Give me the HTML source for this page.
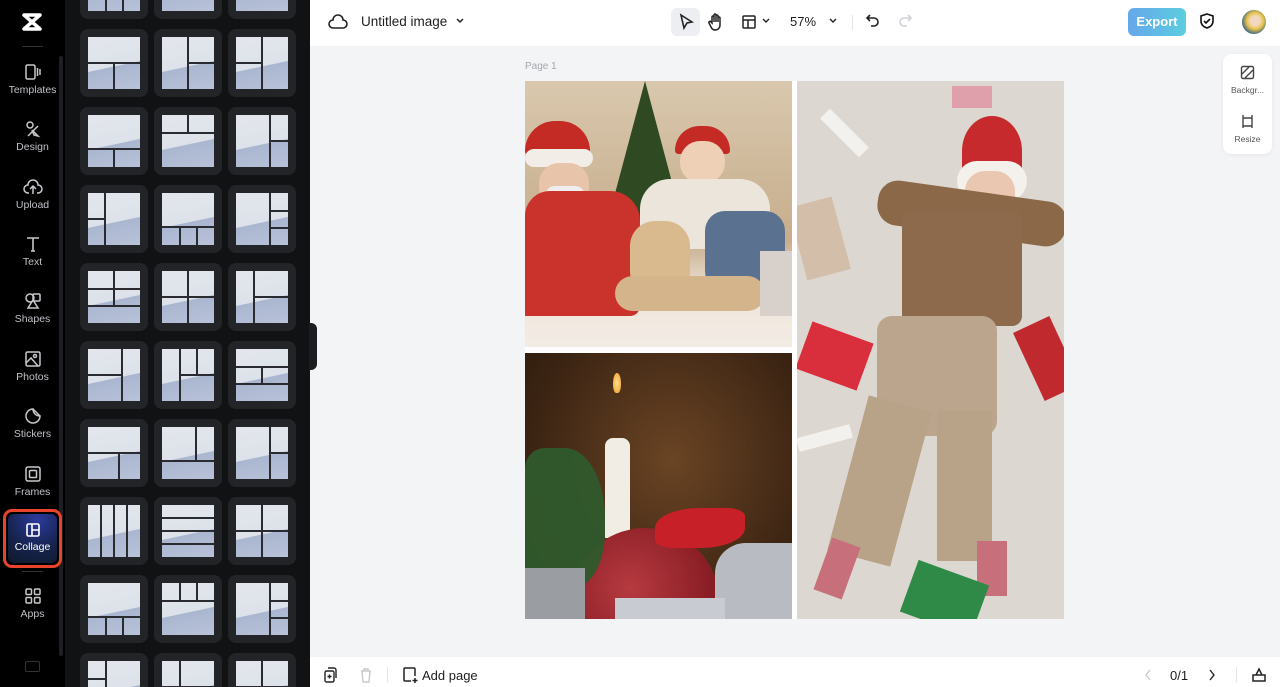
<!DOCTYPE html>
<html><head><meta charset="utf-8"><style>
*{box-sizing:border-box;margin:0;padding:0}
body{width:1280px;height:687px;overflow:hidden;font-family:"Liberation Sans",sans-serif;background:#f3f4f6;position:relative}
.side{position:absolute;left:0;top:0;width:65px;height:687px;background:#000}
.nav{position:absolute;left:0;width:65px;text-align:center;color:#bfc1c6;font-size:10.5px}
.nav svg{display:block;margin:0 auto 3px}
.panel{position:absolute;left:65px;top:0;width:245px;height:687px;background:#111214;overflow:hidden}
.card{position:absolute;width:68px;height:68px;background:#232428;border-radius:8px}
.t{position:absolute;left:8px;top:8px;width:52px;height:52px;background:linear-gradient(168deg,#e3e6ec 0%,#dde2ea 55%,#aab6d0 56%,#b8c2d9 100%);overflow:hidden}
.t i{position:absolute;background:#2a2b30}
.top{position:absolute;left:310px;top:0;width:970px;height:46px;background:#fff}
.bot{position:absolute;left:310px;top:657px;width:970px;height:30px;background:#fff}
.ph{position:absolute;overflow:hidden}
.ph div{position:absolute}
</style></head><body>
<div class="side">
 <svg style="position:absolute;left:20px;top:11px" width="24" height="22" viewBox="0 0 24 22"><path d="M4 4h16L4 18h16L4 4z" fill="none" stroke="#fff" stroke-width="3.5" stroke-linejoin="round"/></svg>
 <div style="position:absolute;left:22px;top:46px;width:21px;height:1px;background:#333"></div>
 <div style="position:absolute;left:59px;top:56px;width:4px;height:600px;background:#1e1f22;border-radius:2px"></div>
 <div class="nav" style="top:63px"><svg width="18" height="18" viewBox="0 0 18 18" fill="none" stroke="#c6c8cc" stroke-width="1.5"><rect x="2" y="2" width="9" height="14" rx="1.5"/><path d="M13.5 5v8M16 6v6"/></svg>Templates</div>
 <div class="nav" style="top:120px"><svg width="18" height="18" viewBox="0 0 18 18" fill="none" stroke="#c6c8cc" stroke-width="1.5"><circle cx="6" cy="5" r="3"/><path d="M4 16l10-10M8 10l6 6-4-1z"/></svg>Design</div>
 <div class="nav" style="top:178px"><svg width="20" height="18" viewBox="0 0 20 18" fill="none" stroke="#c6c8cc" stroke-width="1.5"><path d="M6 15H5a4 4 0 0 1 0-8 5 5 0 0 1 10 0 4 4 0 0 1 0 8h-1M10 16V9M7 11l3-3 3 3"/></svg>Upload</div>
 <div class="nav" style="top:235px"><svg width="18" height="18" viewBox="0 0 18 18" fill="none" stroke="#c6c8cc" stroke-width="1.6"><path d="M3 3h12M9 3v13M7 16h4"/></svg>Text</div>
 <div class="nav" style="top:292px"><svg width="18" height="18" viewBox="0 0 18 18" fill="none" stroke="#c6c8cc" stroke-width="1.5"><circle cx="6" cy="6" r="4"/><rect x="9" y="2" width="7" height="7" rx="1"/><path d="M9 8l-5 8h10z"/></svg>Shapes</div>
 <div class="nav" style="top:350px"><svg width="18" height="18" viewBox="0 0 18 18" fill="none" stroke="#c6c8cc" stroke-width="1.5"><rect x="2" y="2" width="14" height="14" rx="1.5"/><circle cx="11" cy="6" r="1.5"/><path d="M2 13l5-5 7 8"/></svg>Photos</div>
 <div class="nav" style="top:407px"><svg width="18" height="18" viewBox="0 0 18 18" fill="none" stroke="#c6c8cc" stroke-width="1.5"><path d="M16 9A7 7 0 1 1 9 2c0 4 3 7 7 7zM9 2l7 7"/></svg>Stickers</div>
 <div class="nav" style="top:465px"><svg width="18" height="18" viewBox="0 0 18 18" fill="none" stroke="#c6c8cc" stroke-width="1.5"><rect x="2" y="2" width="14" height="14" rx="2"/><rect x="5.5" y="5.5" width="7" height="7" rx="1"/></svg>Frames</div>
 <div style="position:absolute;left:3px;top:509px;width:59px;height:59px;border:3px solid #e8432b;border-radius:9px;background:#000"></div>
 <div style="position:absolute;left:8px;top:514px;width:49px;height:49px;border-radius:6px;background:radial-gradient(circle at 60% 10%,#2b3a9c,#15224a 60%,#0f1a2a)"></div>
 <div class="nav" style="top:522px;color:#fff"><svg width="16" height="16" viewBox="0 0 16 16" fill="none" stroke="#fff" stroke-width="1.6"><rect x="2" y="2" width="12" height="12" rx="1.5"/><path d="M7 2v12M7 8h7"/></svg>Collage</div>
 <div style="position:absolute;left:22px;top:571px;width:21px;height:1px;background:#333"></div>
 <div class="nav" style="top:587px"><svg width="18" height="18" viewBox="0 0 18 18" fill="none" stroke="#c6c8cc" stroke-width="1.5"><rect x="2" y="2" width="5.5" height="5.5" rx="1"/><rect x="10.5" y="2" width="5.5" height="5.5" rx="1"/><rect x="2" y="10.5" width="5.5" height="5.5" rx="1"/><rect x="10.5" y="10.5" width="5.5" height="5.5" rx="1"/></svg>Apps</div>
 <div style="position:absolute;left:25px;top:661px;width:15px;height:11px;border:1.5px solid #333;border-radius:2px"></div>
</div>
<div class="panel">
<div class="card" style="left:15px;top:-49px"><div class="t"><i style="left:17px;top:0;width:2px;height:52px"></i><i style="left:34px;top:0;width:2px;height:52px"></i></div></div>
<div class="card" style="left:89px;top:-49px"><div class="t"></div></div>
<div class="card" style="left:163px;top:-49px"><div class="t"></div></div>
<div class="card" style="left:15px;top:29px"><div class="t"><i style="left:0;top:25px;width:52px;height:2px"></i><i style="left:25px;top:25px;width:2px;height:27px"></i></div></div>
<div class="card" style="left:89px;top:29px"><div class="t"><i style="left:25px;top:0;width:2px;height:52px"></i><i style="left:25px;top:25px;width:27px;height:2px"></i></div></div>
<div class="card" style="left:163px;top:29px"><div class="t"><i style="left:25px;top:0;width:2px;height:52px"></i><i style="left:0;top:25px;width:27px;height:2px"></i></div></div>
<div class="card" style="left:15px;top:107px"><div class="t"><i style="left:0;top:33px;width:52px;height:2px"></i><i style="left:25px;top:33px;width:2px;height:19px"></i></div></div>
<div class="card" style="left:89px;top:107px"><div class="t"><i style="left:0;top:17px;width:52px;height:2px"></i><i style="left:25px;top:0;width:2px;height:17px"></i></div></div>
<div class="card" style="left:163px;top:107px"><div class="t"><i style="left:33px;top:0;width:2px;height:52px"></i><i style="left:33px;top:25px;width:19px;height:2px"></i></div></div>
<div class="card" style="left:15px;top:185px"><div class="t"><i style="left:16px;top:0;width:2px;height:52px"></i><i style="left:0;top:25px;width:16px;height:2px"></i></div></div>
<div class="card" style="left:89px;top:185px"><div class="t"><i style="left:0;top:33px;width:52px;height:2px"></i><i style="left:17px;top:33px;width:2px;height:19px"></i><i style="left:34px;top:33px;width:2px;height:19px"></i></div></div>
<div class="card" style="left:163px;top:185px"><div class="t"><i style="left:33px;top:0;width:2px;height:52px"></i><i style="left:33px;top:17px;width:19px;height:2px"></i><i style="left:33px;top:34px;width:19px;height:2px"></i></div></div>
<div class="card" style="left:15px;top:263px"><div class="t"><i style="left:0;top:17px;width:52px;height:2px"></i><i style="left:0;top:34px;width:52px;height:2px"></i><i style="left:25px;top:0;width:2px;height:34px"></i></div></div>
<div class="card" style="left:89px;top:263px"><div class="t"><i style="left:25px;top:0;width:2px;height:52px"></i><i style="left:0;top:25px;width:52px;height:2px"></i></div></div>
<div class="card" style="left:163px;top:263px"><div class="t"><i style="left:17px;top:0;width:2px;height:52px"></i><i style="left:17px;top:25px;width:35px;height:2px"></i></div></div>
<div class="card" style="left:15px;top:341px"><div class="t"><i style="left:33px;top:0;width:2px;height:52px"></i><i style="left:0;top:25px;width:33px;height:2px"></i></div></div>
<div class="card" style="left:89px;top:341px"><div class="t"><i style="left:17px;top:0;width:2px;height:52px"></i><i style="left:17px;top:25px;width:35px;height:2px"></i><i style="left:34px;top:0;width:2px;height:25px"></i></div></div>
<div class="card" style="left:163px;top:341px"><div class="t"><i style="left:0;top:17px;width:52px;height:2px"></i><i style="left:0;top:34px;width:52px;height:2px"></i><i style="left:25px;top:17px;width:2px;height:17px"></i></div></div>
<div class="card" style="left:15px;top:419px"><div class="t"><i style="left:0;top:25px;width:52px;height:2px"></i><i style="left:30px;top:25px;width:2px;height:27px"></i></div></div>
<div class="card" style="left:89px;top:419px"><div class="t"><i style="left:33px;top:0;width:2px;height:33px"></i><i style="left:0;top:33px;width:52px;height:2px"></i></div></div>
<div class="card" style="left:163px;top:419px"><div class="t"><i style="left:33px;top:0;width:2px;height:52px"></i><i style="left:33px;top:25px;width:19px;height:2px"></i></div></div>
<div class="card" style="left:15px;top:497px"><div class="t"><i style="left:12px;top:0;width:2px;height:52px"></i><i style="left:25px;top:0;width:2px;height:52px"></i><i style="left:38px;top:0;width:2px;height:52px"></i></div></div>
<div class="card" style="left:89px;top:497px"><div class="t"><i style="left:0;top:12px;width:52px;height:2px"></i><i style="left:0;top:25px;width:52px;height:2px"></i><i style="left:0;top:38px;width:52px;height:2px"></i></div></div>
<div class="card" style="left:163px;top:497px"><div class="t"><i style="left:25px;top:0;width:2px;height:52px"></i><i style="left:0;top:25px;width:52px;height:2px"></i></div></div>
<div class="card" style="left:15px;top:575px"><div class="t"><i style="left:0;top:33px;width:52px;height:2px"></i><i style="left:17px;top:33px;width:2px;height:19px"></i><i style="left:34px;top:33px;width:2px;height:19px"></i></div></div>
<div class="card" style="left:89px;top:575px"><div class="t"><i style="left:0;top:17px;width:52px;height:2px"></i><i style="left:17px;top:0;width:2px;height:17px"></i><i style="left:34px;top:0;width:2px;height:17px"></i></div></div>
<div class="card" style="left:163px;top:575px"><div class="t"><i style="left:33px;top:0;width:2px;height:52px"></i><i style="left:33px;top:17px;width:19px;height:2px"></i><i style="left:33px;top:34px;width:19px;height:2px"></i></div></div>
<div class="card" style="left:15px;top:653px"><div class="t"><i style="left:17px;top:0;width:2px;height:52px"></i><i style="left:0;top:17px;width:17px;height:2px"></i></div></div>
<div class="card" style="left:89px;top:653px"><div class="t"><i style="left:17px;top:0;width:2px;height:52px"></i><i style="left:0;top:25px;width:52px;height:2px"></i></div></div>
<div class="card" style="left:163px;top:653px"><div class="t"><i style="left:25px;top:0;width:2px;height:52px"></i><i style="left:0;top:25px;width:52px;height:2px"></i></div></div>
</div>
<div style="position:absolute;left:309px;top:323px;width:8px;height:47px;background:#1c1d20;border-radius:0 6px 6px 0"></div>

<div class="top">
 <svg style="position:absolute;left:18px;top:13px" width="20" height="18" viewBox="0 0 20 18" fill="none" stroke="#222" stroke-width="1.6"><path d="M6 15H5a4 4 0 0 1 0-8 5 5 0 0 1 10 0 4 4 0 0 1 0 8H6z"/></svg>
 <div style="position:absolute;left:51px;top:14px;font-size:13.5px;color:#1d1d1f">Untitled image</div>
 <svg style="position:absolute;left:145px;top:17px" width="10" height="8" viewBox="0 0 10 8" fill="none" stroke="#222" stroke-width="1.5"><path d="M2 2l3 3 3-3"/></svg>
 <div style="position:absolute;left:361px;top:8px;width:29px;height:28px;background:#eceef1;border-radius:6px"></div>
 <svg style="position:absolute;left:368px;top:13px" width="16" height="18" viewBox="0 0 16 18" fill="none" stroke="#222" stroke-width="1.6"><path d="M3 2l11 7-5 1-3 5z"/></svg>
 <svg style="position:absolute;left:398px;top:12px" width="16" height="20" viewBox="0 0 16 20" fill="none" stroke="#222" stroke-width="1.5"><path d="M4 11V5a1 1 0 0 1 2 0v5V3a1 1 0 0 1 2 0v7V4a1 1 0 0 1 2 0v6V6a1 1 0 0 1 2 0v7c0 3-2 5-5 5-2 0-3-1-4-3l-2-4a1 1 0 0 1 2-1z"/></svg>
 <svg style="position:absolute;left:431px;top:14px" width="16" height="16" viewBox="0 0 16 16" fill="none" stroke="#222" stroke-width="1.5"><rect x="2" y="2" width="12" height="12" rx="1"/><path d="M2 6h12M7 6v8"/></svg>
 <svg style="position:absolute;left:451px;top:17px" width="10" height="8" viewBox="0 0 10 8" fill="none" stroke="#222" stroke-width="1.4"><path d="M2 2l3 3 3-3"/></svg>
 <div style="position:absolute;left:480px;top:14px;font-size:13px;color:#1d1d1f">57%</div>
 <svg style="position:absolute;left:518px;top:17px" width="10" height="8" viewBox="0 0 10 8" fill="none" stroke="#222" stroke-width="1.4"><path d="M2 2l3 3 3-3"/></svg>
 <div style="position:absolute;left:542px;top:15px;width:1px;height:15px;background:#e3e4e7"></div>
 <svg style="position:absolute;left:555px;top:13px" width="16" height="16" viewBox="0 0 16 16" fill="none" stroke="#222" stroke-width="1.6"><path d="M5 2L2 5l3 3M2 5h7a4 4 0 0 1 0 8H6"/></svg>
 <svg style="position:absolute;left:587px;top:13px" width="16" height="16" viewBox="0 0 16 16" fill="none" stroke="#cfd1d5" stroke-width="1.6"><path d="M11 2l3 3-3 3M14 5H7a4 4 0 0 0 0 8h3"/></svg>
 <div style="position:absolute;left:818px;top:8px;width:58px;height:28px;border-radius:6px;background:linear-gradient(90deg,#66a7ea,#5ccde0);color:#fff;font-size:13px;font-weight:bold;text-align:center;line-height:28px">Export</div>
 <svg style="position:absolute;left:889px;top:12px" width="16" height="18" viewBox="0 0 16 18" fill="none" stroke="#111" stroke-width="1.6"><path d="M8 2l6 2v5c0 4-3 6-6 7-3-1-6-3-6-7V4z"/><path d="M5 9l2 2 4-4"/></svg>
 <div style="position:absolute;left:932px;top:10px;width:24px;height:24px;border-radius:50%;background:radial-gradient(circle at 55% 45%,#f2d8c0 25%,#e6c24a 45%,#2e5e88 75%)"></div>
</div>

<div style="position:absolute;left:525px;top:61px;font-size:10px;color:#a3a7ae">Page 1</div>
<div style="position:absolute;left:525px;top:81px;width:539px;height:538px;background:#fff"></div>

<div class="ph" style="left:525px;top:81px;width:267px;height:266px;background:linear-gradient(180deg,#d9c8ae 0%,#c7ad8c 60%,#efe6dc 80%,#f3ece4 100%)">
 <div style="left:80px;top:0;width:0;height:0;border-left:40px solid transparent;border-right:40px solid transparent;border-bottom:150px solid #2f4a22"></div>
 <div style="left:0;top:40px;width:65px;height:35px;background:#c42b24;border-radius:30px 30px 5px 5px"></div>
 <div style="left:0;top:68px;width:68px;height:18px;background:#f2ede6;border-radius:9px"></div>
 <div style="left:14px;top:82px;width:50px;height:45px;background:#e8c4aa;border-radius:20px"></div>
 <div style="left:20px;top:105px;width:40px;height:20px;background:#eeeeee;border-radius:10px"></div>
 <div style="left:0;top:110px;width:115px;height:125px;background:#c9332b;border-radius:25px 30px 10px 0"></div>
 <div style="left:150px;top:45px;width:55px;height:28px;background:#c42b24;border-radius:28px 28px 4px 4px"></div>
 <div style="left:155px;top:60px;width:45px;height:42px;background:#edd0b6;border-radius:20px"></div>
 <div style="left:115px;top:98px;width:130px;height:70px;background:#ebe5dc;border-radius:30px 30px 8px 8px"></div>
 <div style="left:180px;top:130px;width:80px;height:80px;background:#5b7190;border-radius:20px"></div>
 <div style="left:105px;top:140px;width:60px;height:75px;background:#d9ba8e;border-radius:25px"></div>
 <div style="left:90px;top:195px;width:150px;height:35px;background:#d4b48a;border-radius:20px"></div>
 <div style="left:235px;top:170px;width:32px;height:65px;background:#d8d0cb"></div>
</div>
<div class="ph" style="left:525px;top:353px;width:267px;height:266px;background:radial-gradient(ellipse at 55% 40%,#6a4424,#3a2312 70%,#2a190c)">
 <div style="left:88px;top:20px;width:8px;height:20px;background:radial-gradient(#ffe28a,#f09a2a);border-radius:50% 50% 40% 40%"></div>
 <div style="left:80px;top:85px;width:25px;height:100px;background:#f1ede4;border-radius:8px 8px 0 0"></div>
 <div style="left:45px;top:175px;width:150px;height:150px;background:radial-gradient(circle at 40% 40%,#b63a40,#8c1f26 60%,#5c1217);border-radius:50%"></div>
 <div style="left:130px;top:155px;width:90px;height:40px;background:#c82028;border-radius:50% 20% 50% 20%"></div>
 <div style="left:0;top:95px;width:80px;height:140px;background:#2f5a2c;border-radius:20px 50% 40% 10px;opacity:.95"></div>
 <div style="left:0;top:215px;width:60px;height:51px;background:#9a9da2"></div>
 <div style="left:190px;top:190px;width:77px;height:76px;background:#b8bcc2;border-radius:40% 0 0 0"></div>
 <div style="left:90px;top:245px;width:110px;height:21px;background:#c8ccd2"></div>
</div>
<div class="ph" style="left:797px;top:81px;width:267px;height:538px;background:#ddd7d1">
 <div style="left:155px;top:5px;width:40px;height:22px;background:#e0a0ab"></div>
 <div style="left:20px;top:45px;width:55px;height:14px;background:#f3f1ee;transform:rotate(45deg)"></div>
 <div style="left:0;top:120px;width:45px;height:75px;background:#d3beaa;transform:rotate(-15deg)"></div>
 <div style="left:165px;top:35px;width:60px;height:70px;background:#c62a2d;border-radius:60% 60% 10% 10%"></div>
 <div style="left:160px;top:80px;width:70px;height:40px;background:#f4f0ec;border-radius:30px"></div>
 <div style="left:168px;top:90px;width:50px;height:45px;background:#e9c7b0;border-radius:20px"></div>
 <div style="left:80px;top:110px;width:190px;height:45px;background:#8b6848;border-radius:20px;transform:rotate(8deg)"></div>
 <div style="left:105px;top:130px;width:120px;height:115px;background:#8c6a4b;border-radius:10px"></div>
 <div style="left:80px;top:235px;width:120px;height:120px;background:#bba58c;border-radius:15px"></div>
 <div style="left:50px;top:320px;width:65px;height:160px;background:#b8a288;transform:rotate(15deg)"></div>
 <div style="left:140px;top:330px;width:55px;height:150px;background:#b8a288"></div>
 <div style="left:25px;top:460px;width:30px;height:55px;background:#c76f7a;transform:rotate(20deg)"></div>
 <div style="left:180px;top:460px;width:30px;height:55px;background:#c76f7a"></div>
 <div style="left:5px;top:250px;width:65px;height:50px;background:#d92f3d;transform:rotate(20deg)"></div>
 <div style="left:230px;top:240px;width:40px;height:75px;background:#c02a2e;transform:rotate(-25deg)"></div>
 <div style="left:110px;top:490px;width:75px;height:55px;background:#2f8a48;transform:rotate(20deg)"></div>
 <div style="left:0;top:350px;width:55px;height:14px;background:#f3f1ee;transform:rotate(-15deg)"></div>
</div>

<div style="position:absolute;left:1223px;top:54px;width:49px;height:100px;background:#fff;border-radius:8px;box-shadow:0 1px 4px rgba(0,0,0,.06)"></div>
<svg style="position:absolute;left:1240px;top:65px" width="15" height="15" viewBox="0 0 15 15" fill="none" stroke="#444" stroke-width="1.4"><rect x="1.5" y="1.5" width="12" height="12" rx="1.5"/><path d="M2 9l7-7M5 13l8-8"/></svg>
<div style="position:absolute;left:1223px;top:85px;width:49px;text-align:center;font-size:8.5px;color:#555">Backgr...</div>
<svg style="position:absolute;left:1240px;top:114px" width="15" height="15" viewBox="0 0 15 15" fill="none" stroke="#444" stroke-width="1.4"><path d="M3 4h9v8H3zM3 1v3M12 1v3M12 12v2M3 12v2"/></svg>
<div style="position:absolute;left:1223px;top:134px;width:49px;text-align:center;font-size:8.5px;color:#555">Resize</div>

<div class="bot">
 <svg style="position:absolute;left:13px;top:10px" width="14" height="16" viewBox="0 0 14 16" fill="none" stroke="#222" stroke-width="1.4"><rect x="2" y="4" width="9" height="11" rx="1.5"/><path d="M5 1h6a2 2 0 0 1 2 2v8M6.5 7.5v4M4.5 9.5h4"/></svg>
 <svg style="position:absolute;left:49px;top:10px" width="14" height="16" viewBox="0 0 14 16" fill="none" stroke="#c8cace" stroke-width="1.4"><path d="M2 4h10M5 4V2h4v2M3 4l1 11h6l1-11"/></svg>
 <div style="position:absolute;left:77px;top:10px;width:1px;height:15px;background:#e3e4e7"></div>
 <svg style="position:absolute;left:92px;top:9px" width="16" height="18" viewBox="0 0 16 18" fill="none" stroke="#222" stroke-width="1.5"><path d="M9 15H3a1 1 0 0 1-1-1V3a1 1 0 0 1 1-1h9a1 1 0 0 1 1 1v7M13 12v5M10.5 14.5h5"/></svg>
 <div style="position:absolute;left:112px;top:11px;font-size:13px;color:#1d1d1f">Add page</div>
 <svg style="position:absolute;left:834px;top:12px" width="8" height="12" viewBox="0 0 8 12" fill="none" stroke="#c8cace" stroke-width="1.4"><path d="M6 1L2 6l4 5"/></svg>
 <div style="position:absolute;left:860px;top:11px;font-size:13px;color:#1d1d1f">0/1</div>
 <svg style="position:absolute;left:898px;top:12px" width="8" height="12" viewBox="0 0 8 12" fill="none" stroke="#222" stroke-width="1.4"><path d="M2 1l4 5-4 5"/></svg>
 <div style="position:absolute;left:926px;top:10px;width:1px;height:15px;background:#e3e4e7"></div>
 <svg style="position:absolute;left:941px;top:9px" width="16" height="17" viewBox="0 0 16 17" fill="none" stroke="#222" stroke-width="1.5"><path d="M2 9h12v6H2zM5 9l3-6 3 6"/></svg>
</div>
</body></html>
